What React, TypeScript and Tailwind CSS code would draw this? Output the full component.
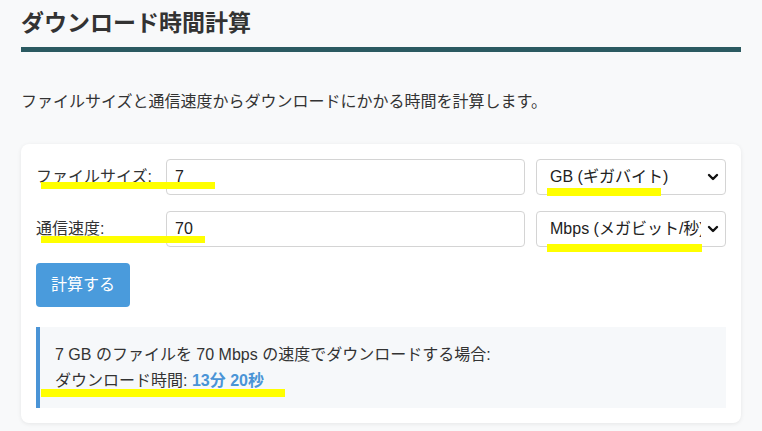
import { useState } from "react";

const font = "font-['Liberation_Sans','Noto_Sans_CJK_JP',sans-serif]";

function Chevron() {
  return (
    <svg
      className="pointer-events-none absolute right-[7px] top-1/2 -translate-y-1/2"
      width="12"
      height="8"
      viewBox="0 0 12 8"
    >
      <polyline
        points="2,2 6,6 10,2"
        fill="none"
        stroke="#111"
        strokeWidth="2.4"
        strokeLinecap="round"
        strokeLinejoin="round"
      />
    </svg>
  );
}

// yellow marker stroke drawn over the screenshot
function Mark({ className }: { className: string }) {
  return <div className={`pointer-events-none absolute bg-[#ffff00] ${className}`} />;
}

function Row({
  label,
  value,
  unit,
  options,
  onValue,
  onUnit,
  labelMark,
  unitMark,
}: {
  label: string;
  value: string;
  unit: string;
  options: { v: string; t: string }[];
  onValue: (v: string) => void;
  onUnit: (v: string) => void;
  labelMark: string;
  unitMark: string;
}) {
  return (
    <div className="relative flex items-center">
      <label className="w-[130px] shrink-0 text-base text-[#333]">{label}</label>
      <input
        className="h-[36px] min-w-0 flex-1 rounded-[4px] border border-[#d4d4d4] bg-white px-[8px] text-base text-[#222] outline-none"
        value={value}
        onChange={(e) => onValue(e.target.value)}
      />
      <div className="relative ml-[11px] w-[190px] shrink-0">
        <select
          className="h-[36px] w-full appearance-none rounded-[4px] border border-[#d4d4d4] bg-white pl-[13px] pr-[24px] text-base text-[#222] outline-none"
          value={unit}
          onChange={(e) => onUnit(e.target.value)}
        >
          {options.map((o) => (
            <option key={o.v} value={o.v}>
              {o.t}
            </option>
          ))}
        </select>
        <Chevron />
        <Mark className={unitMark} />
      </div>
      <Mark className={labelMark} />
    </div>
  );
}

export default function App() {
  const [size, setSize] = useState("7");
  const [speed, setSpeed] = useState("70");
  const [sizeUnit, setSizeUnit] = useState("GB");
  const [speedUnit, setSpeedUnit] = useState("Mbps");

  return (
    <div className={`min-h-screen bg-[#f8f9fa] px-[21px] pt-[9px] ${font}`}>
      <h1 className="border-b-[5px] border-[#2b5a61] pb-[10px] text-[23px] font-bold leading-[28px] text-[#333]">
        ダウンロード時間計算
      </h1>
      <p className="mt-[37px] text-base leading-[26px] text-[#333]">
        ファイルサイズと通信速度からダウンロードにかかる時間を計算します。
      </p>

      <div className="mt-[29px] rounded-lg bg-white p-[15px] shadow-[0_1px_4px_rgba(0,0,0,0.08)]">
        <div className="flex flex-col gap-[16px]">
          <Row
            label="ファイルサイズ:"
            value={size}
            unit={sizeUnit}
            onValue={setSize}
            onUnit={setSizeUnit}
            labelMark="left-[5px] top-[23px] h-[7px] w-[174px]"
            unitMark="left-[11px] top-[29px] h-[8px] w-[114px]"
            options={[
              { v: "MB", t: "MB (メガバイト)" },
              { v: "GB", t: "GB (ギガバイト)" },
            ]}
          />
          <Row
            label="通信速度:"
            value={speed}
            unit={speedUnit}
            onValue={setSpeed}
            onUnit={setSpeedUnit}
            labelMark="left-[5px] top-[25px] h-[7px] w-[164px]"
            unitMark="left-[11px] top-[33px] h-[8px] w-[155px]"
            options={[
              { v: "Mbps", t: "Mbps (メガビット/秒)" },
              { v: "Gbps", t: "Gbps (ギガビット/秒)" },
            ]}
          />
        </div>

        <button className="mt-[16px] h-[44px] rounded-[4px] bg-[#4a9bdc] px-[15px] text-base text-white">
          計算する
        </button>

        <div className="relative mt-[20px] border-l-4 border-[#4a94d6] bg-[#f6f8fa] px-[15px] py-[15px] text-base leading-[25.6px] text-[#333]">
          <p>7 GB のファイルを 70 Mbps の速度でダウンロードする場合:</p>
          <p>
            ダウンロード時間: <span className="font-bold text-[#4a94d6]">13分 20秒</span>
          </p>
          <Mark className="left-[1px] top-[62px] h-[8px] w-[244px]" />
        </div>
      </div>
    </div>
  );
}
